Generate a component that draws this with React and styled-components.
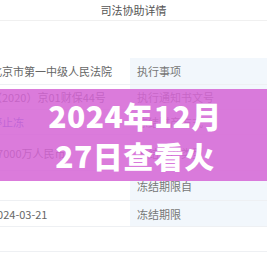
import React from "react";
import styled, { createGlobalStyle } from "styled-components";

const GlobalStyle = createGlobalStyle`
  body {
    margin: 0;
    background: #fff;
    font-family: "Noto Sans CJK SC", "Noto Sans", sans-serif;
  }
`;

const Page = styled.div`
  position: relative;
  width: 267px;
  height: 267px;
  overflow: hidden;
  background: #fff;
`;

const Header = styled.div`
  height: 20px;
  line-height: 20px;
  text-align: center;
  font-size: 11px;
  color: #555;
  border-bottom: 1px solid #f0f0f0;
`;

const Table = styled.div`
  margin-top: 37px;
  margin-left: -9px;
  width: 276px;
`;

const Row = styled.div`
  display: grid;
  grid-template-columns: 139px 1fr;
  height: ${(p) => p.h}px;
  border-bottom: 1px solid #eef0f3;
  box-sizing: border-box;
`;

const Cell = styled.div`
  display: flex;
  align-items: center;
  font-size: 11px;
  color: ${(p) => (p.link ? "#4d6fd8" : "#666")};
  white-space: nowrap;
  overflow: hidden;
`;

const Label = styled(Cell)`
  padding-left: 7px;
  background: ${(p) => (p.plain ? "#fff" : "#f2f7fc")};
  color: #777;
`;

const Overlay = styled.div`
  position: absolute;
  top: 89px;
  left: 0;
  right: 0;
  height: 92px;
  background: rgba(213, 100, 213, 0.85);
  display: flex;
  flex-direction: column;
  align-items: center;
  justify-content: center;
  padding-left: 3px;
  box-sizing: border-box;
`;

const Headline = styled.div`
  color: #fff;
  font-size: 30px;
  font-weight: 900;
  line-height: 40px;
  text-align: center;
  letter-spacing: 0.5px;
`;

const rows = [
  { h: 27, value: "北京市第一中级人民法院", label: "执行事项" },
  { h: 25, value: "（2020）京01财保44号", label: "执行通知书文号" },
  { h: 25, value: "停止冻", label: "冻结财产方式", link: true },
  { h: 36, value: "17000万人民币", label: "冻结财产类型" },
  { h: 30, value: "", label: "冻结期限自" },
  { h: 26, value: "2024-03-21", label: "冻结期限" },
  { h: 25, value: "", label: "", plain: true },
];

const App = () => {
  return (
    <Page>
      <GlobalStyle />
      <Header>司法协助详情</Header>
      <Table>
        {rows.map((r, i) => (
          <Row key={i} h={r.h}>
            <Cell link={r.link}>{r.value}</Cell>
            <Label plain={r.plain}>{r.label}</Label>
          </Row>
        ))}
      </Table>
      <Overlay>
        <Headline>2024年12月</Headline>
        <Headline>27日查看火</Headline>
      </Overlay>
    </Page>
  );
};

export default App;
